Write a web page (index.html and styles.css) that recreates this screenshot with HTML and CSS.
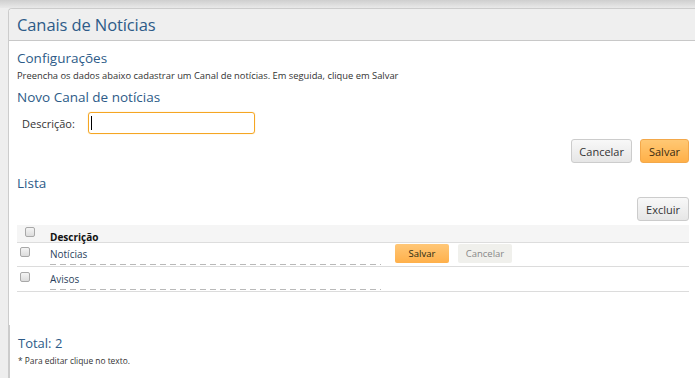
FILE: index.html
```html
<!DOCTYPE html>
<html lang="pt-BR">
<head>
<meta charset="utf-8">
<title>Canais de Notícias</title>
<link rel="stylesheet" href="styles.css">
</head>
<body>
<div class="topbar"></div>
<div class="panel">
  <div class="panel-header"><h1 class="title">Canais de Notícias</h1></div>
  <div class="panel-body">
    <h2 class="section">Configurações</h2>
    <p class="hint">Preencha os dados abaixo cadastrar um Canal de notícias. Em seguida, clique em Salvar</p>
    <h2 class="section sub">Novo Canal de notícias</h2>
    <div class="form-row">
      <label class="label" for="desc">Descrição:</label>
      <div class="input"><span class="caret"></span></div>
    </div>
    <div class="actions">
      <button class="btn">Cancelar</button>
      <button class="btn btn-primary">Salvar</button>
    </div>
    <h2 class="section list-title">Lista</h2>
    <div class="actions excl">
      <button class="btn">Excluir</button>
    </div>
    <div class="table">
      <div class="thead">
        <div class="cell-check head-check"><input type="checkbox" class="chk"></div>
        <div class="th">Descrição</div>
      </div>
      <div class="row">
        <div class="cell-check"><input type="checkbox" class="chk"></div>
        <div class="cell-text"><span class="editable">Notícias</span></div>
        <div class="row-actions">
          <button class="mini mini-primary">Salvar</button>
          <button class="mini mini-cancel">Cancelar</button>
        </div>
      </div>
      <div class="row row2">
        <div class="cell-check"><input type="checkbox" class="chk"></div>
        <div class="cell-text"><span class="editable">Avisos</span></div>
      </div>
    </div>
  </div>
  <div class="panel-footer">
    <div class="total">Total: 2</div>
    <div class="note">* Para editar clique no texto.</div>
  </div>
</div>
</body>
</html>
```

FILE: styles.css
```css
* { box-sizing: border-box; }
html, body { margin: 0; padding: 0; }
body {
  background: #eeeeee;
  font-family: "Open Sans", "Noto Sans", sans-serif;
  color: #333;
  width: 695px;
  height: 378px;
  overflow: hidden;
}
.topbar {
  height: 8px;
  background: linear-gradient(to bottom, #cfcfcf, #e9e9e9);
}
.panel {
  margin-left: 8px;
  border: 1px solid #cccccc;
  border-right: none;
  border-bottom: none;
  border-top-left-radius: 4px;
  background: #fff;
}
.panel-header {
  height: 32px;
  background: #efefef;
  border-bottom: 1px solid #c8c8c8;
  padding-left: 8px;
  display: flex;
  align-items: center;
  border-top-left-radius: 4px;
}
.title {
  margin: 0;
  font-weight: normal;
  font-size: 16.5px;
  color: #2d5b88;
  letter-spacing: -0.1px;
}
.panel-body {
  padding: 7px 5px 0 8px;
  height: 284px;
}
.section {
  margin: 0;
  font-weight: normal;
  font-size: 13.5px;
  line-height: 20px;
  color: #2d5b88;
}
.hint {
  margin: 2px 0 0;
  font-size: 9.35px;
  line-height: 12px;
  color: #333;
}
.sub { margin-top: 5px; }
.form-row {
  display: flex;
  align-items: center;
  margin-top: 5px;
  height: 22px;
}
.label {
  font-size: 11px;
  color: #333;
  padding-left: 5px;
  width: 71px;
}
.input {
  width: 167px;
  height: 22px;
  border: 1px solid #f5a623;
  border-radius: 3px;
  box-shadow: 0 0 1px #ffc060;
  padding: 3px 2px;
}
.caret {
  display: block;
  width: 1px;
  height: 14px;
  background: #000;
}
.actions {
  display: flex;
  justify-content: flex-end;
  gap: 8px;
  margin-top: 5px;
  padding-right: 1px;
}
.btn {
  font-family: inherit;
  font-size: 11px;
  height: 24px;
  padding: 0 7px;
  color: #333;
  border: 1px solid #cccccc;
  border-radius: 3px;
  background: linear-gradient(to bottom, #f8f8f8, #e6e6e6);
}
.btn-primary {
  border-color: #f3a84a;
  background: linear-gradient(to bottom, #ffc874, #ffb048);
  color: #3a2a10;
  padding: 0 8px;
}
.list-title { margin-top: 10px; }
.excl { margin-top: 4px; }
.excl .btn { padding: 0 8px; }
.table {
  margin-top: 4px;
  width: 672px;
}
.thead {
  display: flex;
  align-items: center;
  height: 18px;
  background: #f5f5f5;
  border-bottom: 1px solid #dddddd;
}
.cell-check {
  width: 33px;
  padding-left: 3px;
  display: flex;
  align-items: center;
}
.head-check { padding-left: 8px; }
.chk {
  appearance: none;
  -webkit-appearance: none;
  margin: 0;
  width: 10px;
  height: 10px;
  border: 1px solid #a8a8a8;
  border-radius: 2px;
  background: linear-gradient(to bottom, #f4f4f4, #dcdcdc);
}
.head-check .chk { position: relative; top: -2px; }
.th {
  font-size: 10px;
  font-weight: bold;
  color: #111;
  position: relative;
  top: 3px;
}
.row {
  display: flex;
  align-items: flex-start;
  height: 24px;
  border-bottom: 1px solid #dcdcdc;
}
.row .cell-check { padding-top: 4px; }
.row2 { height: 25px; }
.row2 .cell-check { padding-top: 5px; }
.cell-text {
  width: 345px;
  padding-top: 4px;
}
.editable {
  display: block;
  width: 331px;
  font-size: 10px;
  line-height: 14px;
  padding-bottom: 4px;
  color: #2b3f5c;
  background-image: repeating-linear-gradient(to right, #b9b9b9 0 6px, transparent 6px 10px);
  background-size: 100% 1px;
  background-repeat: no-repeat;
  background-position: left bottom;
}
.row2 .cell-text { padding-top: 5px; }
.row-actions {
  display: flex;
  gap: 9px;
  padding-top: 1px;
}
.mini {
  font-family: inherit;
  font-size: 9.5px;
  height: 19px;
  width: 54px;
  border-radius: 2px;
  border: none;
  padding: 0;
}
.mini-primary {
  background: linear-gradient(to bottom, #ffc777, #ffb04a);
  color: #2a2a10;
}
.mini-cancel {
  background: #f0f0ec;
  color: #888;
}
.panel-footer {
  border-left: 1px solid #ccc;
  padding: 9px 0 0 8px;
  height: 60px;
}
.total {
  font-size: 13px;
  line-height: 18px;
  color: #2d5b88;
}
.note {
  font-size: 8.4px;
  line-height: 12px;
  color: #333;
  margin-top: 3px;
}
```
